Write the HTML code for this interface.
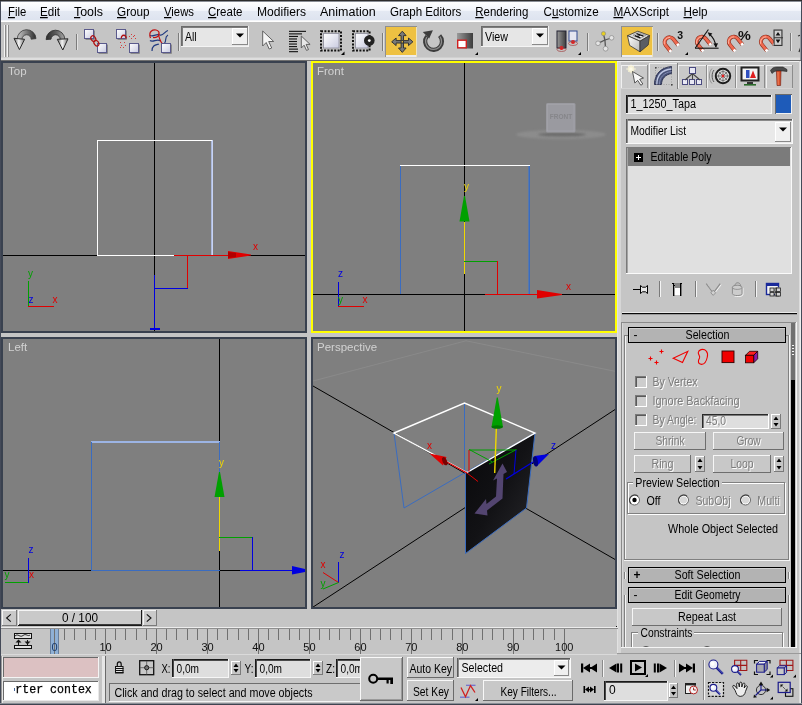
<!DOCTYPE html>
<html><head><meta charset="utf-8"><title>3ds Max</title>
<style>
html,body{margin:0;padding:0;background:#c5c5c5;overflow:hidden}
svg{display:block;will-change:transform}
text{font-family:"Liberation Sans",sans-serif;white-space:pre}
.mono{font-family:"Liberation Mono",monospace}
</style></head><body>
<svg width="802" height="705" viewBox="0 0 802 705">
<defs>
<linearGradient id="gMenu" x1="0" y1="0" x2="0" y2="1">
<stop offset="0" stop-color="#ffffff"/><stop offset="0.45" stop-color="#f1f4fa"/><stop offset="0.5" stop-color="#e4e9f3"/><stop offset="1" stop-color="#dde3ef"/>
</linearGradient>
<linearGradient id="gArrow" x1="0" y1="0" x2="1" y2="1">
<stop offset="0" stop-color="#e8e8e8"/><stop offset="1" stop-color="#3a3a3a"/>
</linearGradient>
<linearGradient id="gArrowR" x1="1" y1="0" x2="0" y2="1">
<stop offset="0" stop-color="#5a5a5a"/><stop offset="1" stop-color="#e8e8e8"/>
</linearGradient>
<linearGradient id="gBox" x1="0" y1="0" x2="1" y2="1">
<stop offset="0" stop-color="#ffffff"/><stop offset="1" stop-color="#c9cbe0"/>
</linearGradient>
<linearGradient id="gDark" x1="0" y1="0" x2="1" y2="0">
<stop offset="0" stop-color="#9a9a9a"/><stop offset="1" stop-color="#3c3c3c"/>
</linearGradient>
<linearGradient id="gMag" x1="0" y1="0" x2="1" y2="1">
<stop offset="0" stop-color="#ff9a80"/><stop offset="1" stop-color="#d83a20"/>
</linearGradient>
<radialGradient id="gCube" cx="0.5" cy="0.5" r="0.7">
<stop offset="0" stop-color="#a0a0a0"/><stop offset="1" stop-color="#8c8c8c"/>
</radialGradient>
<linearGradient id="gFace" x1="0" y1="0" x2="1" y2="1">
<stop offset="0" stop-color="#08080a"/><stop offset="0.5" stop-color="#121215"/><stop offset="1" stop-color="#2a2a2e"/>
</linearGradient>
<linearGradient id="gUndo" x1="0" y1="0" x2="1" y2="0">
<stop offset="0" stop-color="#c4c4c4"/><stop offset="0.4" stop-color="#8a8a8a"/><stop offset="1" stop-color="#2c2c2c"/>
</linearGradient>
<linearGradient id="gRedo" x1="0" y1="0" x2="1" y2="0">
<stop offset="0" stop-color="#2c2c2c"/><stop offset="0.5" stop-color="#5a5a5a"/><stop offset="1" stop-color="#a8a8a8"/>
</linearGradient>
<linearGradient id="gHead" x1="0" y1="0" x2="1" y2="0">
<stop offset="0" stop-color="#6a6a6a"/><stop offset="0.45" stop-color="#f4f4f4"/><stop offset="1" stop-color="#7a7a7a"/>
</linearGradient>
<linearGradient id="gKey" x1="0" y1="0" x2="1" y2="1">
<stop offset="0" stop-color="#ffffff"/><stop offset="1" stop-color="#b8b8b8"/>
</linearGradient>
</defs>
<rect x="0" y="0" width="802" height="705" fill="#c5c5c5"/>
<rect x="0" y="0" width="802" height="1" fill="#2b2b2b"/>
<rect x="0" y="1" width="802" height="1" fill="#8a8e96"/>
<rect x="0" y="1" width="1" height="704" fill="#444a58"/>
<rect x="1" y="2" width="801" height="19" fill="url(#gMenu)"/>
<rect x="1" y="20" width="801" height="1" fill="#f4f6fa"/>
<rect x="1" y="21" width="801" height="1" fill="#ffffff"/>
<text x="8" y="16" font-size="12.5" fill="#000" textLength="18.2" lengthAdjust="spacingAndGlyphs"><tspan text-decoration="underline">F</tspan>ile</text>
<text x="40" y="16" font-size="12.5" fill="#000" textLength="20" lengthAdjust="spacingAndGlyphs"><tspan text-decoration="underline">E</tspan>dit</text>
<text x="74" y="16" font-size="12.5" fill="#000" textLength="29" lengthAdjust="spacingAndGlyphs"><tspan text-decoration="underline">T</tspan>ools</text>
<text x="117" y="16" font-size="12.5" fill="#000" textLength="32.6" lengthAdjust="spacingAndGlyphs"><tspan text-decoration="underline">G</tspan>roup</text>
<text x="164" y="16" font-size="12.5" fill="#000" textLength="30" lengthAdjust="spacingAndGlyphs"><tspan text-decoration="underline">V</tspan>iews</text>
<text x="208" y="16" font-size="12.5" fill="#000" textLength="34.5" lengthAdjust="spacingAndGlyphs"><tspan text-decoration="underline">C</tspan>reate</text>
<text x="257" y="16" font-size="12.5" fill="#000" textLength="49" lengthAdjust="spacingAndGlyphs">Modifiers</text>
<text x="320" y="16" font-size="12.5" fill="#000" textLength="55.6" lengthAdjust="spacingAndGlyphs">Animation</text>
<text x="390" y="16" font-size="12.5" fill="#000" textLength="71.3" lengthAdjust="spacingAndGlyphs">Graph Editors</text>
<text x="475.3" y="16" font-size="12.5" fill="#000" textLength="53.0" lengthAdjust="spacingAndGlyphs"><tspan text-decoration="underline">R</tspan>endering</text>
<text x="543.6" y="16" font-size="12.5" fill="#000" textLength="55.1" lengthAdjust="spacingAndGlyphs">C<tspan text-decoration="underline">u</tspan>stomize</text>
<text x="613.4" y="16" font-size="12.5" fill="#000" textLength="55.6" lengthAdjust="spacingAndGlyphs"><tspan text-decoration="underline">M</tspan>AXScript</text>
<text x="683.5" y="16" font-size="12.5" fill="#000" textLength="24.0" lengthAdjust="spacingAndGlyphs"><tspan text-decoration="underline">H</tspan>elp</text>
<rect x="1" y="22" width="801" height="38" fill="#c5c5c5"/>
<rect x="1" y="57" width="801" height="1" fill="#d0d0d0"/>
<rect x="1" y="58" width="801" height="2" fill="#dedede"/>
<rect x="1" y="60" width="801" height="1" fill="#6e6e6e"/>
<rect x="4" y="25" width="1" height="32" fill="#f4f4f4"/>
<rect x="5" y="25" width="1" height="32" fill="#8a8a8a"/>
<rect x="7" y="25" width="1" height="32" fill="#f4f4f4"/>
<rect x="8" y="25" width="1" height="32" fill="#8a8a8a"/>
<path d="M17.3,39.5 A9.2,9.2 0 0 1 36,38.6 L31.2,39.2 A4.6,4.6 0 0 0 22,39.5 Z" fill="url(#gUndo)" stroke="#3a3a3a" stroke-width="0.8"/>
<polygon points="14,38.3 24.6,39.3 19.4,49.6" fill="url(#gHead)" stroke="#2a2a2a" stroke-width="1"/>
<path d="M46.1,39.6 A9.2,9.2 0 0 1 64.8,39.5 L60.2,39.5 A4.6,4.6 0 0 0 51,39.2 Z" fill="url(#gRedo)" stroke="#2a2a2a" stroke-width="0.8"/>
<polygon points="57.3,39.3 68,38.8 62.8,50" fill="url(#gHead)" stroke="#2a2a2a" stroke-width="1"/>
<rect x="76" y="34" width="1" height="16" fill="#7c7c7c"/>
<rect x="77" y="34" width="1" height="16" fill="#e2e2e2"/>
<rect x="84.5" y="29.5" width="9" height="9" fill="url(#gBox)" stroke="#5a5a8c" stroke-width="1"/>
<rect x="85.5" y="39.0" width="9.0" height="1" fill="#8a8a8a"/>
<rect x="94.0" y="30.5" width="1" height="9.0" fill="#8a8a8a"/>
<rect x="97.5" y="43.5" width="9" height="9" fill="url(#gBox)" stroke="#5a5a8c" stroke-width="1"/>
<rect x="98.5" y="53.0" width="9.0" height="1" fill="#8a8a8a"/>
<rect x="107.0" y="44.5" width="1" height="9.0" fill="#8a8a8a"/>
<ellipse cx="93.3" cy="38.6" rx="3" ry="2.2" fill="none" stroke="#b01010" stroke-width="1.2" transform="rotate(55 93.3 38.6)"/>
<ellipse cx="96.4" cy="43.2" rx="3" ry="2.2" fill="none" stroke="#b01010" stroke-width="1.2" transform="rotate(55 96.4 43.2)"/>
<rect x="116.5" y="29.5" width="9" height="9" fill="url(#gBox)" stroke="#5a5a8c" stroke-width="1"/>
<rect x="117.5" y="39.0" width="9.0" height="1" fill="#8a8a8a"/>
<rect x="126.0" y="30.5" width="1" height="9.0" fill="#8a8a8a"/>
<rect x="129.5" y="43.5" width="9" height="9" fill="url(#gBox)" stroke="#5a5a8c" stroke-width="1"/>
<rect x="130.5" y="53.0" width="9.0" height="1" fill="#8a8a8a"/>
<rect x="139.0" y="44.5" width="1" height="9.0" fill="#8a8a8a"/>
<path d="M121.5,38.5 A2.4,2.4 0 1 1 126,38.5" fill="none" stroke="#b01010" stroke-width="1.3"/>
<rect x="129" y="36" width="1" height="1" fill="#d04040"/>
<rect x="131" y="34" width="1" height="1" fill="#d04040"/>
<rect x="133" y="36" width="1" height="1" fill="#d04040"/>
<rect x="135" y="38" width="1" height="1" fill="#d04040"/>
<rect x="131" y="38" width="1" height="1" fill="#d04040"/>
<rect x="134" y="35" width="1" height="1" fill="#d04040"/>
<rect x="120" y="42" width="1" height="1" fill="#d04040"/>
<rect x="124" y="42" width="1" height="1" fill="#d04040"/>
<rect x="121" y="45" width="1" height="1" fill="#d04040"/>
<rect x="125" y="45" width="1" height="1" fill="#d04040"/>
<rect x="120" y="47" width="1" height="1" fill="#d04040"/>
<rect x="123" y="47" width="1" height="1" fill="#d04040"/>
<path d="M150,35 C152,38 156,33 160,35 C163,36.5 165,31 168,30.5" fill="none" stroke="#203a80" stroke-width="1.2"/>
<path d="M150,40.5 C153,43 157,38 160.5,41" fill="none" stroke="#203a80" stroke-width="1.2"/>
<path d="M152,51 C152,45 156,45 159,44" fill="none" stroke="#203a80" stroke-width="1.2"/>
<path d="M168,35 C164,37 167,41 164.5,43" fill="none" stroke="#203a80" stroke-width="1.2"/>
<path d="M150.5,38 C148,31 153,29.5 156,30 C161,31 160,38 153,37.5 M158.5,33.5 C159,38 160,41 162.5,44" fill="none" stroke="#c01010" stroke-width="1.2"/>
<rect x="161.5" y="43.5" width="9" height="9" fill="url(#gBox)" stroke="#5a5a8c" stroke-width="1"/>
<rect x="162.5" y="53.0" width="9.0" height="1" fill="#8a8a8a"/>
<rect x="171.0" y="44.5" width="1" height="9.0" fill="#8a8a8a"/>
<rect x="178" y="33" width="1" height="18" fill="#7c7c7c"/>
<rect x="179" y="33" width="1" height="18" fill="#e2e2e2"/>
<rect x="181" y="26" width="68" height="21" fill="#e6e6e6"/>
<rect x="181" y="26" width="68" height="1" fill="#6a6a6a"/>
<rect x="181" y="26" width="1" height="21" fill="#6a6a6a"/>
<rect x="181" y="46" width="68" height="1" fill="#f4f4f4"/>
<rect x="248" y="26" width="1" height="21" fill="#f4f4f4"/>
<rect x="182" y="27" width="66" height="1" fill="#7c7c7c"/>
<rect x="182" y="27" width="1" height="19" fill="#7c7c7c"/>
<text x="185" y="40.5" font-size="12" fill="#000" textLength="11.6" lengthAdjust="spacingAndGlyphs">All</text>
<rect x="232" y="28" width="16" height="17" fill="#f0f0f0"/>
<rect x="232" y="28" width="16" height="1" fill="#ffffff"/>
<rect x="232" y="28" width="1" height="17" fill="#ffffff"/>
<rect x="232" y="44" width="16" height="1" fill="#8a8a8a"/>
<rect x="247" y="28" width="1" height="17" fill="#8a8a8a"/>
<polygon points="236.0,33.5 244.0,33.5 240.0,37.5" fill="#000" stroke="none" stroke-width="1"/>
<polygon points="262.7,31.0 262.7,46.0 266.2,42.5 269.2,49.0 271.7,48.0 268.7,41.5 273.7,41.5" fill="#f4f4f4" stroke="#555" stroke-width="0.9"/>
<rect x="289" y="30.8" width="17" height="1.1" fill="#111"/>
<rect x="289" y="33.34" width="13" height="1.1" fill="#111"/>
<rect x="289" y="35.88" width="9" height="1.1" fill="#111"/>
<rect x="289" y="38.42" width="8" height="1.1" fill="#111"/>
<rect x="289" y="40.96" width="8" height="1.1" fill="#111"/>
<rect x="289" y="43.5" width="8" height="1.1" fill="#111"/>
<rect x="289" y="46.04" width="8" height="1.1" fill="#111"/>
<rect x="289" y="48.58" width="9" height="1.1" fill="#111"/>
<rect x="289" y="51.120000000000005" width="9" height="1.1" fill="#111"/>
<polygon points="301.3,36.0 301.3,48.0 304.1,45.2 306.5,50.4 308.5,49.6 306.1,44.4 310.1,44.4" fill="#e8e8e8" stroke="#555" stroke-width="0.9"/>
<rect x="323.5" y="33.5" width="15.5" height="14.5" fill="url(#gBox)" stroke="#8a8a9a" stroke-width="0.8"/>
<rect x="321" y="31.2" width="20" height="19.4" fill="none" stroke="#111" stroke-width="2" stroke-dasharray="2 1.4"/>
<polygon points="344.5,51.5 344.5,55 341,55" fill="#000" stroke="none" stroke-width="1"/>
<rect x="355.5" y="33.5" width="12.5" height="14.5" fill="url(#gBox)" stroke="#8a8a9a" stroke-width="0.8"/>
<rect x="353" y="31.2" width="16.6" height="19.4" fill="none" stroke="#111" stroke-width="2" stroke-dasharray="2 1.4"/>
<circle cx="369.3" cy="40.6" r="5.3" fill="#222"/><circle cx="369.3" cy="40.6" r="1.4" fill="#fff"/>
<rect x="382" y="33" width="1" height="18" fill="#7c7c7c"/>
<rect x="383" y="33" width="1" height="18" fill="#e2e2e2"/>
<rect x="385" y="26" width="32" height="31" fill="#eec142"/>
<rect x="385" y="26" width="32" height="1" fill="#8f8f8f"/>
<rect x="385" y="26" width="1" height="31" fill="#8f8f8f"/>
<rect x="386" y="55" width="31" height="1" fill="#ececec"/>
<rect x="386" y="56" width="31" height="1" fill="#ececec"/>
<rect x="416" y="27" width="1" height="30" fill="#f0e4b8"/>
<g transform="rotate(0 402.3 41.8)"><path d="M401.1,40.599999999999994 L401.1,35.599999999999994 L398.5,35.599999999999994 L402.3,31.199999999999996 L406.1,35.599999999999994 L403.5,35.599999999999994 L403.5,40.599999999999994 Z" fill="#7a7a7a" stroke="#333" stroke-width="1"/></g>
<g transform="rotate(90 402.3 41.8)"><path d="M401.1,40.599999999999994 L401.1,35.599999999999994 L398.5,35.599999999999994 L402.3,31.199999999999996 L406.1,35.599999999999994 L403.5,35.599999999999994 L403.5,40.599999999999994 Z" fill="#7a7a7a" stroke="#333" stroke-width="1"/></g>
<g transform="rotate(180 402.3 41.8)"><path d="M401.1,40.599999999999994 L401.1,35.599999999999994 L398.5,35.599999999999994 L402.3,31.199999999999996 L406.1,35.599999999999994 L403.5,35.599999999999994 L403.5,40.599999999999994 Z" fill="#7a7a7a" stroke="#333" stroke-width="1"/></g>
<g transform="rotate(270 402.3 41.8)"><path d="M401.1,40.599999999999994 L401.1,35.599999999999994 L398.5,35.599999999999994 L402.3,31.199999999999996 L406.1,35.599999999999994 L403.5,35.599999999999994 L403.5,40.599999999999994 Z" fill="#7a7a7a" stroke="#333" stroke-width="1"/></g>
<path d="M439.6,35.6 A8.4,8.4 0 1 1 427,36.2" fill="none" stroke="#3c3c3c" stroke-width="4.2"/>
<path d="M440,36.7 A8.0,8.0 0 1 1 426.8,37.2" fill="none" stroke="#8c8c8c" stroke-width="1.3"/>
<polygon points="422.8,32 432.9,30.2 429.2,38.6" fill="#3c3c3c" stroke="none" stroke-width="1"/>
<rect x="457" y="33" width="16" height="15.5" fill="url(#gDark)"/>
<rect x="457.7" y="40.2" width="8.6" height="7.6" fill="#ffffff" stroke="#d02020" stroke-width="1.4"/>
<polygon points="478,52 478,55 475,55" fill="#000" stroke="none" stroke-width="1"/>
<rect x="481" y="26" width="68" height="21" fill="#e6e6e6"/>
<rect x="481" y="26" width="68" height="1" fill="#6a6a6a"/>
<rect x="481" y="26" width="1" height="21" fill="#6a6a6a"/>
<rect x="481" y="46" width="68" height="1" fill="#f4f4f4"/>
<rect x="548" y="26" width="1" height="21" fill="#f4f4f4"/>
<rect x="482" y="27" width="66" height="1" fill="#7c7c7c"/>
<rect x="482" y="27" width="1" height="19" fill="#7c7c7c"/>
<text x="485" y="40.5" font-size="12" fill="#000" textLength="23" lengthAdjust="spacingAndGlyphs">View</text>
<rect x="532" y="28" width="16" height="17" fill="#f0f0f0"/>
<rect x="532" y="28" width="16" height="1" fill="#ffffff"/>
<rect x="532" y="28" width="1" height="17" fill="#ffffff"/>
<rect x="532" y="44" width="16" height="1" fill="#8a8a8a"/>
<rect x="547" y="28" width="1" height="17" fill="#8a8a8a"/>
<polygon points="536.0,33.5 544.0,33.5 540.0,37.5" fill="#000" stroke="none" stroke-width="1"/>
<rect x="557" y="31" width="9" height="17" fill="url(#gDark)" stroke="#223" stroke-width="1"/>
<rect x="569" y="31" width="8" height="10" fill="#e6e6f0" stroke="#334a90" stroke-width="1"/>
<circle cx="561.5" cy="48" r="2" fill="#e02020"/><ellipse cx="561.5" cy="49.5" rx="4.5" ry="2" fill="none" stroke="#a04040" stroke-width="0.7"/>
<circle cx="573" cy="42" r="2" fill="#e02020"/><ellipse cx="573" cy="43.5" rx="4.5" ry="2" fill="none" stroke="#a04040" stroke-width="0.7"/>
<polygon points="581,52 581,55 578,55" fill="#000" stroke="none" stroke-width="1"/>
<rect x="587" y="33" width="1" height="18" fill="#7c7c7c"/>
<rect x="588" y="33" width="1" height="18" fill="#e2e2e2"/>
<line x1="604.9" y1="40" x2="603.5" y2="34" stroke="#555" stroke-width="1.3"/>
<line x1="604.9" y1="40" x2="611.5" y2="38" stroke="#555" stroke-width="1.3"/>
<line x1="604.9" y1="40" x2="598" y2="43.3" stroke="#555" stroke-width="1.3"/>
<line x1="604.9" y1="40" x2="605.6" y2="48.5" stroke="#555" stroke-width="1.3"/>
<circle cx="603.5" cy="33.7" r="2.1" fill="#e8d020" stroke="#8a8a8a" stroke-width="0.7"/>
<circle cx="611.6" cy="37.8" r="2.3" fill="#e4e4e4" stroke="#8a8a8a" stroke-width="0.7"/>
<circle cx="598" cy="43.3" r="2.3" fill="#e4e4e4" stroke="#8a8a8a" stroke-width="0.7"/>
<circle cx="605.6" cy="48.7" r="2.4" fill="#e4e4e4" stroke="#8a8a8a" stroke-width="0.7"/>
<rect x="621" y="26" width="32" height="31" fill="#eec142"/>
<rect x="621" y="26" width="32" height="1" fill="#8f8f8f"/>
<rect x="621" y="26" width="1" height="31" fill="#8f8f8f"/>
<rect x="622" y="55" width="31" height="1" fill="#ececec"/>
<rect x="622" y="56" width="31" height="1" fill="#ececec"/>
<rect x="652" y="27" width="1" height="30" fill="#f0e4b8"/>
<polygon points="627.5,35.7 637.8,31.2 649.6,35.6 640,41.2" fill="#d8d8d8" stroke="#333" stroke-width="0.8"/>
<polygon points="627.5,35.7 640,41.2 640,51.8 629.6,45.4" fill="url(#gKey)" stroke="#333" stroke-width="0.8"/>
<polygon points="640,41.2 649.6,35.6 648.2,45 640,51.8" fill="#5a5d64" stroke="#333" stroke-width="0.8"/>
<polygon points="633,35.2 638.4,32.8 645.6,35.4 640,38.4" fill="#f4f4f4" stroke="#666" stroke-width="0.5"/>
<path d="M636.5,33.6 L643.5,36.2 M640,34.9 L637.2,36.6 M634.8,35.6 L640.4,37.8" fill="none" stroke="#111" stroke-width="1.3"/>
<rect x="657" y="33" width="1" height="18" fill="#7c7c7c"/>
<rect x="658" y="33" width="1" height="18" fill="#e2e2e2"/>
<g transform="translate(0 0)"><path d="M670.7,51.5 L665.7,45.3 A4.9,4.9 0 0 1 673.3,39.1 L678.3,45.3" fill="none" stroke="#8a3020" stroke-width="3.9"/><path d="M670.7,51.5 L665.7,45.3 A4.9,4.9 0 0 1 673.3,39.1 L678.3,45.3" fill="none" stroke="#f06a50" stroke-width="2.7"/><path d="M664.3,44.4 A5.6,5.6 0 0 1 670,37.4" fill="none" stroke="#ffb4a0" stroke-width="1"/><path d="M669.6,50.1 L671,51.9 M677.2,43.9 L678.6,45.7" fill="none" stroke="#ffffff" stroke-width="2.7"/></g>
<text x="677.3" y="38.6" font-size="10.5" fill="#111" font-weight="bold">3</text>
<polygon points="688,52 688,55 685,55" fill="#000" stroke="none" stroke-width="1"/>
<g transform="translate(32.3 -0.6)"><path d="M670.7,51.5 L665.7,45.3 A4.9,4.9 0 0 1 673.3,39.1 L678.3,45.3" fill="none" stroke="#8a3020" stroke-width="3.9"/><path d="M670.7,51.5 L665.7,45.3 A4.9,4.9 0 0 1 673.3,39.1 L678.3,45.3" fill="none" stroke="#f06a50" stroke-width="2.7"/><path d="M664.3,44.4 A5.6,5.6 0 0 1 670,37.4" fill="none" stroke="#ffb4a0" stroke-width="1"/><path d="M669.6,50.1 L671,51.9 M677.2,43.9 L678.6,45.7" fill="none" stroke="#ffffff" stroke-width="2.7"/></g>
<line x1="695" y1="48.2" x2="718.6" y2="48.2" stroke="#111" stroke-width="1.1"/>
<line x1="695.3" y1="48" x2="708.4" y2="29.5" stroke="#111" stroke-width="1.1"/>
<path d="M709.2,34 C713,37 715.5,41.5 715.8,47" fill="none" stroke="#111" stroke-width="1.1"/>
<polygon points="707.6,32.3 712.4,33.4 709.6,36.6" fill="#111" stroke="none" stroke-width="1"/>
<polygon points="713.4,43.6 718,43.2 716,47.8" fill="#111" stroke="none" stroke-width="1"/>
<g transform="translate(64.2 -0.6)"><path d="M670.7,51.5 L665.7,45.3 A4.9,4.9 0 0 1 673.3,39.1 L678.3,45.3" fill="none" stroke="#8a3020" stroke-width="3.9"/><path d="M670.7,51.5 L665.7,45.3 A4.9,4.9 0 0 1 673.3,39.1 L678.3,45.3" fill="none" stroke="#f06a50" stroke-width="2.7"/><path d="M664.3,44.4 A5.6,5.6 0 0 1 670,37.4" fill="none" stroke="#ffb4a0" stroke-width="1"/><path d="M669.6,50.1 L671,51.9 M677.2,43.9 L678.6,45.7" fill="none" stroke="#ffffff" stroke-width="2.7"/></g>
<text x="738" y="40" font-size="13" fill="#111" textLength="12.8" lengthAdjust="spacingAndGlyphs" font-weight="bold">%</text>
<g transform="translate(96.3 -0.6)"><path d="M670.7,51.5 L665.7,45.3 A4.9,4.9 0 0 1 673.3,39.1 L678.3,45.3" fill="none" stroke="#8a3020" stroke-width="3.9"/><path d="M670.7,51.5 L665.7,45.3 A4.9,4.9 0 0 1 673.3,39.1 L678.3,45.3" fill="none" stroke="#f06a50" stroke-width="2.7"/><path d="M664.3,44.4 A5.6,5.6 0 0 1 670,37.4" fill="none" stroke="#ffb4a0" stroke-width="1"/><path d="M669.6,50.1 L671,51.9 M677.2,43.9 L678.6,45.7" fill="none" stroke="#ffffff" stroke-width="2.7"/></g>
<rect x="774" y="30" width="8" height="15.5" fill="#a8a8a8" stroke="#333" stroke-width="1"/>
<rect x="774" y="37.3" width="9" height="1" fill="#333"/>
<rect x="775" y="31" width="6" height="5.6" fill="#d0d0d0"/>
<rect x="775" y="38.6" width="6" height="5.8" fill="#d0d0d0"/>
<polygon points="775.6,35.6 780.4,35.6 778,32" fill="#111" stroke="none" stroke-width="1"/>
<polygon points="775.6,39.6 780.4,39.6 778,43.2" fill="#111" stroke="none" stroke-width="1"/>
<rect x="790" y="33" width="1" height="18" fill="#7c7c7c"/>
<rect x="791" y="33" width="1" height="18" fill="#e2e2e2"/>
<path d="M798,36 L801,35 L802,44 L799,52" fill="none" stroke="#333" stroke-width="1.2"/>
<g shape-rendering="crispEdges">
<rect x="1" y="61" width="306" height="272" fill="#39414f"/>
<rect x="3" y="63" width="302" height="268" fill="#7f7f7f"/>
<rect x="311" y="61" width="306" height="272" fill="#ffff00"/>
<rect x="313" y="63" width="302" height="268" fill="#7f7f7f"/>
<rect x="1" y="337" width="306" height="272" fill="#39414f"/>
<rect x="3" y="339" width="302" height="268" fill="#7f7f7f"/>
<rect x="311" y="337" width="306" height="272" fill="#39414f"/>
<rect x="313" y="339" width="302" height="268" fill="#7f7f7f"/>
</g>
<g shape-rendering="crispEdges">
<rect x="154" y="63" width="1" height="268" fill="#000"/>
<rect x="3" y="255" width="302" height="1" fill="#000"/>
<rect x="97" y="140" width="116" height="1" fill="#ffffff"/>
<rect x="97" y="140" width="1" height="116" fill="#ffffff"/>
<rect x="97" y="255" width="78" height="1" fill="#ffffff"/>
<rect x="212" y="140" width="1" height="116" fill="#c8d4f4"/>
<rect x="211" y="141" width="1" height="114" fill="#aab8dc"/>
<rect x="174" y="255" width="55" height="1" fill="#e00000"/>
<rect x="187" y="255" width="1" height="34" fill="#e00000"/>
<rect x="154" y="288" width="34" height="1" fill="#0000e0"/>
<rect x="154" y="275" width="1" height="55" fill="#0000e0"/>
<rect x="150" y="328" width="10" height="2" fill="#0000e0"/>
<rect x="28" y="281" width="1" height="26" fill="#00a000"/>
<rect x="28" y="306" width="26" height="1" fill="#e00000"/>
</g>
<polygon points="228,251 228,259 251,255.5 251,254.5" fill="#e00000" stroke="none" stroke-width="1"/>
<polygon points="228,252 236,253 236,257 228,258" fill="#b00000" stroke="none" stroke-width="1"/>
<text x="8" y="75" font-size="11.5" fill="#d2d2d2">Top</text>
<text x="253" y="250" font-size="10" fill="#e00000">x</text>
<text x="28" y="277" font-size="10" fill="#00a000">y</text>
<text x="28.5" y="303" font-size="10" fill="#0000e0">z</text>
<text x="52.5" y="303" font-size="10" fill="#e00000">x</text>
<g shape-rendering="crispEdges">
<rect x="464" y="63" width="1" height="268" fill="#000"/>
<rect x="313" y="294" width="302" height="1" fill="#000"/>
<rect x="400" y="165" width="130" height="1" fill="#ffffff"/>
<rect x="400" y="166" width="1" height="128" fill="#3a6cc0"/>
<rect x="529" y="166" width="1" height="128" fill="#3a6cc0"/>
<rect x="528" y="166" width="1" height="128" fill="#5678ae"/>
<rect x="464" y="222" width="1" height="52" fill="#f0d800"/>
<rect x="464" y="261" width="34" height="1" fill="#00a000"/>
<rect x="497" y="261" width="1" height="34" fill="#e00000"/>
<rect x="485" y="294" width="53" height="1" fill="#e00000"/>
<rect x="338" y="282" width="1" height="25" fill="#0000e0"/>
<rect x="338" y="306" width="26" height="1" fill="#e00000"/>
</g>
<polygon points="459.5,221.5 469.5,221.5 465,196 464,196" fill="#00a000" stroke="none" stroke-width="1"/>
<polygon points="537,290 537,298.5 562,295 562,294" fill="#e00000" stroke="none" stroke-width="1"/>
<text x="317" y="75" font-size="11.5" fill="#d2d2d2">Front</text>
<text x="464" y="190" font-size="10" fill="#f0d800">y</text>
<text x="566" y="290" font-size="10" fill="#e00000">x</text>
<text x="338" y="277" font-size="10" fill="#0000e0">z</text>
<text x="338" y="303" font-size="10" fill="#00a000">y</text>
<text x="362.5" y="303" font-size="10" fill="#e00000">x</text>
<filter id="fB" x="-20%" y="-50%" width="140%" height="200%"><feGaussianBlur stdDeviation="1.2"/></filter>
<ellipse cx="561" cy="134.5" rx="45" ry="4.6" fill="#8c8c8c" filter="url(#fB)"/>
<ellipse cx="562" cy="134.6" rx="24" ry="1.9" fill="#6c6c6c" filter="url(#fB)"/>
<rect x="546" y="103" width="29.5" height="29.5" fill="#9a9aa0" rx="1.5"/>
<rect x="547.5" y="104.5" width="26.5" height="26.5" fill="none" stroke="#a4a4aa" stroke-width="0.8"/>
<text x="561" y="118.5" font-size="6.5" fill="#86868a" text-anchor="middle" font-weight="bold">FRONT</text>
<g shape-rendering="crispEdges">
<rect x="219" y="339" width="1" height="268" fill="#000"/>
<rect x="3" y="570" width="302" height="1" fill="#000"/>
<rect x="91" y="441" width="129" height="1" fill="#9cb4e4"/>
<rect x="91" y="442" width="129" height="1" fill="#9cb4e4"/>
<rect x="91" y="442" width="1" height="129" fill="#3a6cc0"/>
<rect x="91" y="570" width="129" height="1" fill="#3a6cc0"/>
<rect x="219" y="442" width="1" height="31" fill="#3a6cc0"/>
<rect x="219" y="497" width="1" height="54" fill="#f0d800"/>
<rect x="219" y="537" width="34" height="1" fill="#00a000"/>
<rect x="252" y="537" width="1" height="34" fill="#0000e0"/>
<rect x="240" y="570" width="53" height="1" fill="#0000e0"/>
<rect x="28" y="558" width="1" height="25" fill="#0000e0"/>
<rect x="5" y="582" width="23" height="1" fill="#00a000"/>
</g>
<polygon points="214.5,497 224.5,497 220,472 219,472" fill="#00a000" stroke="none" stroke-width="1"/>
<polygon points="292,566 292,574.5 305,572 305,569" fill="#0000e0" stroke="none" stroke-width="1"/>
<text x="8" y="350.5" font-size="11.5" fill="#d2d2d2">Left</text>
<text x="219" y="466" font-size="10" fill="#f0d800">y</text>
<text x="28.5" y="553" font-size="10" fill="#0000e0">z</text>
<text x="4.5" y="578" font-size="10" fill="#00a000">y</text>
<text x="29" y="578" font-size="10" fill="#e00000">x</text>
<clipPath id="cpP"><rect x="313" y="339" width="302" height="268"/></clipPath>
<g clip-path="url(#cpP)">
<line x1="313" y1="381" x2="466" y2="340.8" stroke="#8a8a8a" stroke-width="1"/>
<line x1="466" y1="340.8" x2="616" y2="371.5" stroke="#8a8a8a" stroke-width="1"/>
<line x1="313" y1="386" x2="616" y2="560" stroke="#000" stroke-width="1"/>
<line x1="313" y1="607.1" x2="616" y2="408.9" stroke="#000" stroke-width="1"/>
<line x1="394" y1="433" x2="404" y2="508" stroke="#3a6cc0" stroke-width="1"/>
<line x1="404" y1="508" x2="466" y2="472" stroke="#3a6cc0" stroke-width="1"/>
<line x1="464.5" y1="403" x2="464.5" y2="472" stroke="#3a6cc0" stroke-width="1"/>
<polygon points="465.5,472.5 535,433 526.5,508 465.5,553.5" fill="url(#gFace)" stroke="#3a6cc0" stroke-width="1"/>
<filter id="fB2"><feGaussianBlur stdDeviation="0.5"/></filter>
<polygon points="474.5,513.5 486,499 486.5,504 496,496.5 497,478.5 493,480.5 502.5,463.5 507,472 503.5,474 502.5,498.5 487,510.5 487.5,515.5" fill="#52446f" stroke="none" stroke-width="1" filter="url(#fB2)"/>
<polygon points="394,433 464.5,403 535,433 467,472.5" fill="none" stroke="#ffffff" stroke-width="1.4"/>
<line x1="469" y1="450" x2="516" y2="450" stroke="#00a000" stroke-width="1"/>
<line x1="469" y1="450" x2="469" y2="472" stroke="#e00000" stroke-width="1"/>
<line x1="469.2" y1="449.5" x2="492" y2="461.7" stroke="#00a000" stroke-width="1"/>
<line x1="516.5" y1="449.5" x2="489" y2="464" stroke="#00a000" stroke-width="1"/>
<line x1="516" y1="450" x2="514" y2="474" stroke="#0000e0" stroke-width="1"/>
<line x1="506" y1="479" x2="533" y2="462" stroke="#0000e0" stroke-width="1.2"/>
<line x1="494.7" y1="473" x2="496.4" y2="427" stroke="#f0d800" stroke-width="1.4"/>
<polygon points="491.5,427 503,427 497.8,397.5 496.8,397.5" fill="#00a000" stroke="none" stroke-width="1"/>
<ellipse cx="497.2" cy="427" rx="5.7" ry="1.8" fill="#007800"/>
<line x1="445" y1="461" x2="467" y2="473" stroke="#e00000" stroke-width="1.2"/>
<line x1="467" y1="473" x2="478" y2="481.5" stroke="#e00000" stroke-width="1"/>
<polygon points="429.5,453.5 446.5,457 443,465.5" fill="#e00000" stroke="none" stroke-width="1"/>
<ellipse cx="444.8" cy="461.2" rx="2.2" ry="4.4" fill="#7a0000" transform="rotate(-25 444.8 461.2)"/>
<polygon points="549,454 534.5,456 536.5,466.5" fill="#0000e0" stroke="none" stroke-width="1"/>
<ellipse cx="535.5" cy="461.3" rx="2.4" ry="5.2" fill="#00007a" transform="rotate(-10 535.5 461.3)"/>
<line x1="338.5" y1="562" x2="338.5" y2="583" stroke="#0000e0" stroke-width="1"/>
<line x1="338.5" y1="582.5" x2="323" y2="572.5" stroke="#e00000" stroke-width="1"/>
<line x1="338.5" y1="582.5" x2="323" y2="589" stroke="#00a000" stroke-width="1"/>
</g>
<text x="317" y="350.5" font-size="11.5" fill="#d2d2d2">Perspective</text>
<text x="496.5" y="392" font-size="10" fill="#f0d800">y</text>
<text x="427" y="449" font-size="10" fill="#e00000">x</text>
<text x="551" y="449" font-size="10" fill="#0000e0">z</text>
<text x="339.5" y="558" font-size="10" fill="#0000e0">z</text>
<text x="320.5" y="568" font-size="10" fill="#e00000">x</text>
<text x="320.5" y="587" font-size="10" fill="#00a000">y</text>
<g shape-rendering="crispEdges">
<rect x="617" y="61" width="4" height="592" fill="#d6d6d6"/>
<rect x="617" y="61" width="1" height="592" fill="#e2e2e2"/>
<rect x="617" y="61" width="185" height="1" fill="#f0f0f0"/>
<rect x="799" y="61" width="1" height="642" fill="#dcdcdc"/>
<rect x="800" y="61" width="1" height="642" fill="#eeeeee"/>
<rect x="621" y="65" width="27" height="23" fill="#c9c9c9"/>
<rect x="621" y="65" width="27" height="1" fill="#f0f0f0"/>
<rect x="621" y="65" width="1" height="23" fill="#f0f0f0"/>
<rect x="647" y="65" width="1" height="23" fill="#8c8c8c"/>
<rect x="621" y="88" width="27" height="1" fill="#d4d4d4"/>
<rect x="649" y="63" width="29" height="26" fill="#c8c8c8"/>
<rect x="649" y="63" width="29" height="1" fill="#ececec"/>
<rect x="649" y="63" width="1" height="26" fill="#f4f4f4"/>
<rect x="677" y="63" width="1" height="26" fill="#808080"/>
<rect x="678" y="65" width="29" height="23" fill="#c9c9c9"/>
<rect x="678" y="65" width="29" height="1" fill="#f0f0f0"/>
<rect x="678" y="65" width="1" height="23" fill="#f0f0f0"/>
<rect x="706" y="65" width="1" height="23" fill="#8c8c8c"/>
<rect x="678" y="88" width="29" height="1" fill="#d4d4d4"/>
<rect x="707" y="65" width="29" height="23" fill="#c9c9c9"/>
<rect x="707" y="65" width="29" height="1" fill="#f0f0f0"/>
<rect x="707" y="65" width="1" height="23" fill="#f0f0f0"/>
<rect x="735" y="65" width="1" height="23" fill="#8c8c8c"/>
<rect x="707" y="88" width="29" height="1" fill="#d4d4d4"/>
<rect x="736" y="65" width="29" height="23" fill="#c9c9c9"/>
<rect x="736" y="65" width="29" height="1" fill="#f0f0f0"/>
<rect x="736" y="65" width="1" height="23" fill="#f0f0f0"/>
<rect x="764" y="65" width="1" height="23" fill="#8c8c8c"/>
<rect x="736" y="88" width="29" height="1" fill="#d4d4d4"/>
<rect x="766" y="65" width="27" height="23" fill="#c9c9c9"/>
<rect x="766" y="65" width="27" height="1" fill="#f0f0f0"/>
<rect x="766" y="65" width="1" height="23" fill="#f0f0f0"/>
<rect x="792" y="65" width="1" height="23" fill="#8c8c8c"/>
<rect x="766" y="88" width="27" height="1" fill="#d4d4d4"/>
</g>
<circle cx="631" cy="69" r="3.4" fill="#fff8d0" opacity="0.7"/><circle cx="631" cy="69" r="1.6" fill="#ffffff"/>
<line x1="626" y1="69" x2="636" y2="69" stroke="#fffbe0" stroke-width="0.7"/>
<line x1="631" y1="64.5" x2="631" y2="73.5" stroke="#fffbe0" stroke-width="0.7"/>
<line x1="628" y1="66" x2="634" y2="72" stroke="#fffbe0" stroke-width="0.5"/>
<line x1="634" y1="66" x2="628" y2="72" stroke="#fffbe0" stroke-width="0.5"/>
<polygon points="632.5,71.5 643.5,78 639.6,79.3 642.8,84 640.8,85.2 637.7,80.4 634.8,83" fill="#f8f8f8" stroke="#333" stroke-width="0.8"/>
<path d="M654.5,84.5 C654.5,74 661,67.5 671.5,66.5 L671.5,73.5 C665.5,74.5 661.5,78.5 661.5,84.5 Z" fill="#4a5478" stroke="#20264a" stroke-width="0.9"/>
<path d="M656.8,84.5 C656.8,75.5 662,70 671.5,69" fill="none" stroke="#c0c8e4" stroke-width="1.3"/>
<path d="M659.4,84.5 C659.4,77.5 663.6,72.6 671.5,71.6" fill="none" stroke="#8088b0" stroke-width="1"/>
<rect x="655" y="67" width="1.5" height="1.5" fill="#222"/>
<rect x="671" y="84" width="1.5" height="1.5" fill="#222"/>
<rect x="655.5" y="67.5" width="16" height="17" fill="none" stroke="#777" stroke-width="0.5" stroke-dasharray="1 1.5"/>
<rect x="689.5" y="67.5" width="6" height="6" fill="#e8e8f4" stroke="#4a4a80" stroke-width="1"/>
<rect x="682.5" y="79.5" width="5" height="5" fill="#e8e8f4" stroke="#4a4a80" stroke-width="1"/>
<rect x="689.5" y="79.5" width="5" height="5" fill="#e8e8f4" stroke="#4a4a80" stroke-width="1"/>
<rect x="696.5" y="79.5" width="5" height="5" fill="#e8e8f4" stroke="#4a4a80" stroke-width="1"/>
<line x1="692.5" y1="74" x2="692.5" y2="79.5" stroke="#444" stroke-width="1.1"/>
<line x1="692" y1="74" x2="685" y2="80" stroke="#444" stroke-width="1.1"/>
<line x1="693" y1="74" x2="700" y2="80" stroke="#444" stroke-width="1.1"/>
<circle cx="723" cy="76" r="7.2" fill="#dcdcdc" stroke="#1a1a1a" stroke-width="2"/><circle cx="723" cy="76" r="4.5" fill="none" stroke="#666" stroke-width="0.8"/>
<line x1="716.5" y1="76" x2="729.5" y2="76" stroke="#555" stroke-width="0.7" transform="rotate(0 723 76)"/>
<line x1="716.5" y1="76" x2="729.5" y2="76" stroke="#555" stroke-width="0.7" transform="rotate(45 723 76)"/>
<line x1="716.5" y1="76" x2="729.5" y2="76" stroke="#555" stroke-width="0.7" transform="rotate(90 723 76)"/>
<line x1="716.5" y1="76" x2="729.5" y2="76" stroke="#555" stroke-width="0.7" transform="rotate(135 723 76)"/>
<circle cx="723" cy="76" r="1.4" fill="#e02020"/>
<path d="M714,70 C711.5,73 711.5,79 714,82" fill="none" stroke="#555" stroke-width="1"/>
<path d="M712,68.5 C708.5,72 708.5,80 712,83.5" fill="none" stroke="#888" stroke-width="0.8"/>
<rect x="741.5" y="67.5" width="17" height="13" fill="#f4f4f4" stroke="#222" stroke-width="2"/>
<rect x="746" y="70" width="3.5" height="8" fill="#3050c0"/>
<polygon points="750,78 756,78 753,70.5" fill="#e02020" stroke="none" stroke-width="1"/>
<rect x="747" y="82" width="6" height="2" fill="#333"/>
<rect x="744" y="84" width="12" height="1.6" fill="#2a6a2a"/>
<path d="M770.5,70.5 C772,68 774,67 777,67 L783,67 L787,69.5 L787,71.5 L783,71 L777,71 C775,71 773.5,72 772,73.5 Z" fill="#4a4a4a" stroke="#222" stroke-width="0.6"/>
<polygon points="776.4,71 781,71 780.6,85.5 777,85.5" fill="#d8502a" stroke="#6a1a10" stroke-width="0.6"/>
<line x1="778" y1="72" x2="778.2" y2="85" stroke="#f09070" stroke-width="0.8"/>
<g shape-rendering="crispEdges">
<rect x="626" y="95" width="146" height="19" fill="#dedede"/>
<rect x="626" y="95" width="146" height="1" fill="#1a1a1a"/>
<rect x="626" y="96" width="146" height="1" fill="#3c3c3c"/>
<rect x="626" y="95" width="1" height="19" fill="#1a1a1a"/>
<rect x="627" y="95" width="1" height="19" fill="#3c3c3c"/>
<rect x="626" y="113" width="146" height="1" fill="#f4f4f4"/>
<rect x="771" y="95" width="1" height="19" fill="#f4f4f4"/>
<rect x="775" y="94" width="17" height="20" fill="#6a6a6a"/>
<rect x="776" y="95" width="16" height="19" fill="#f0f0f0"/>
<rect x="776" y="95" width="15" height="18" fill="#1e5bb9"/>
<rect x="626" y="119" width="167" height="25" fill="#e9e9e9"/>
<rect x="626" y="119" width="167" height="1" fill="#5a5a5a"/>
<rect x="626" y="120" width="167" height="1" fill="#8a8a8a"/>
<rect x="626" y="119" width="1" height="25" fill="#5a5a5a"/>
<rect x="627" y="119" width="1" height="25" fill="#8a8a8a"/>
<rect x="626" y="143" width="167" height="1" fill="#f8f8f8"/>
<rect x="792" y="119" width="1" height="25" fill="#f8f8f8"/>
</g>
<rect x="775" y="122" width="16" height="20" fill="#f0f0f0"/>
<rect x="775" y="122" width="16" height="1" fill="#ffffff"/>
<rect x="775" y="122" width="1" height="20" fill="#ffffff"/>
<rect x="775" y="141" width="16" height="1" fill="#8a8a8a"/>
<rect x="790" y="122" width="1" height="20" fill="#8a8a8a"/>
<polygon points="779.0,127.5 787.0,127.5 783.0,131.5" fill="#000" stroke="none" stroke-width="1"/>
<text x="630.5" y="108" font-size="12" fill="#000" textLength="65.5" lengthAdjust="spacingAndGlyphs">1_1250_Tapa</text>
<text x="630.5" y="134.5" font-size="12" fill="#000" textLength="55.5" lengthAdjust="spacingAndGlyphs">Modifier List</text>
<g shape-rendering="crispEdges">
<rect x="626" y="147" width="166" height="127" fill="#e0e0e0"/>
<rect x="626" y="147" width="166" height="1" fill="#7a7a7a"/>
<rect x="626" y="147" width="1" height="127" fill="#7a7a7a"/>
<rect x="627" y="148" width="1" height="125" fill="#a4a4a4"/>
<rect x="626" y="273" width="166" height="1" fill="#fafafa"/>
<rect x="791" y="147" width="1" height="127" fill="#fafafa"/>
<rect x="628" y="148" width="162" height="18" fill="#7b7b7b"/>
<rect x="634" y="153" width="9" height="9" fill="#000"/>
<rect x="636" y="157" width="5" height="1" fill="#fff"/>
<rect x="638" y="155" width="1" height="5" fill="#fff"/>
</g>
<text x="650.5" y="161" font-size="12" fill="#000" textLength="61" lengthAdjust="spacingAndGlyphs">Editable Poly</text>
<g shape-rendering="crispEdges">
<rect x="659" y="281" width="1" height="16" fill="#7a7a7a"/>
<rect x="660" y="281" width="1" height="16" fill="#f4f4f4"/>
<rect x="695" y="281" width="1" height="16" fill="#7a7a7a"/>
<rect x="696" y="281" width="1" height="16" fill="#f4f4f4"/>
<rect x="755" y="281" width="1" height="16" fill="#7a7a7a"/>
<rect x="756" y="281" width="1" height="16" fill="#f4f4f4"/>
<rect x="633" y="289" width="8" height="1" fill="#000"/>
</g>
<path d="M640.5,285.5 L640.5,293.5 L642.5,291.8 L645.5,291.8 L647.5,293.5 L647.5,285.5 L645.5,287.2 L642.5,287.2 Z" fill="#e8e8e8" stroke="#000" stroke-width="1"/>
<rect x="674" y="284" width="6" height="11" fill="#fff"/>
<rect x="673" y="283" width="1.4" height="13" fill="#000"/>
<rect x="680" y="283" width="1.4" height="13" fill="#000"/>
<path d="M672,283 L675,286 M682,283 L679,286" fill="none" stroke="#000" stroke-width="1"/>
<rect x="675" y="283" width="5" height="5" fill="#888"/>
<path d="M707.2,284.7 L714,294 L721.2,284.7" fill="none" stroke="#f4f4f4" stroke-width="1"/>
<path d="M706.2,283.7 L713.2,293 L720.2,283.7" fill="none" stroke="#8c8c8c" stroke-width="1.1"/>
<polygon points="713.2,290.2 715.6,292.8 713.2,295.4 710.8,292.8" fill="#d0d0d0" stroke="#8c8c8c" stroke-width="0.9"/>
<path d="M733.4,288.2 C733.4,285.6 743,285.6 743,288.2 L743,294.6 C743,297.2 733.4,297.2 733.4,294.6 Z" fill="none" stroke="#f4f4f4" stroke-width="1"/>
<path d="M732.4,287.2 C732.4,284.6 742,284.6 742,287.2 L742,293.6 C742,296.2 732.4,296.2 732.4,293.6 Z" fill="#cccccc" stroke="#8c8c8c" stroke-width="1"/>
<path d="M732.4,287.6 C733,290 741.4,290 742,287.6" fill="none" stroke="#8c8c8c" stroke-width="0.9"/>
<path d="M735,286 C734.6,281.6 741,281.6 740.6,286.4" fill="none" stroke="#8c8c8c" stroke-width="1"/>
<rect x="766.5" y="283.5" width="12" height="11" fill="#f4f4f4" stroke="#1a2a9a" stroke-width="1.4"/>
<rect x="766" y="283" width="13" height="3" fill="#1a2a9a"/>
<rect x="770" y="288" width="4" height="3.5" fill="#cfcfcf" stroke="#222" stroke-width="0.8"/>
<rect x="775" y="288" width="4" height="3.5" fill="#cfcfcf" stroke="#222" stroke-width="0.8"/>
<rect x="770" y="292.5" width="4" height="3.5" fill="#cfcfcf" stroke="#222" stroke-width="0.8"/>
<rect x="775" y="292.5" width="4" height="3.5" fill="#cfcfcf" stroke="#222" stroke-width="0.8"/>
<rect x="777" y="287" width="5" height="9" fill="#c5c5c5" opacity="0.6"/>
<rect x="776.5" y="288" width="4" height="3.5" fill="#cfcfcf" stroke="#222" stroke-width="0.8"/>
<rect x="776.5" y="292.5" width="4" height="3.5" fill="#cfcfcf" stroke="#222" stroke-width="0.8"/>
<g shape-rendering="crispEdges">
<rect x="622" y="312" width="175" height="1" fill="#e8e8e8"/>
<rect x="622" y="313" width="175" height="1" fill="#080808"/>
<rect x="622" y="314" width="175" height="1" fill="#9a9a9a"/>
<rect x="622" y="323" width="1" height="325" fill="#d8d8d8"/>
<rect x="621" y="322" width="175" height="1" fill="#8a8a8a"/>
<rect x="621" y="322" width="1" height="326" fill="#8a8a8a"/>
<rect x="621" y="647" width="176" height="1" fill="#f4f4f4"/>
<rect x="796" y="322" width="1" height="326" fill="#f4f4f4"/>
<rect x="617" y="653" width="184" height="1" fill="#9a9a9a"/>
<rect x="791" y="323" width="4" height="57" fill="#707070"/>
<rect x="791" y="380" width="4" height="267" fill="#000"/>
<rect x="792" y="345" width="2" height="1" fill="#f4f4f4"/>
<rect x="792" y="348" width="2" height="1" fill="#f4f4f4"/>
<rect x="792" y="351" width="2" height="1" fill="#f4f4f4"/>
<rect x="792" y="354" width="2" height="1" fill="#f4f4f4"/>
</g>
<g shape-rendering="crispEdges">
<rect x="624" y="335" width="1" height="225" fill="#808080"/>
<rect x="625" y="335" width="1" height="225" fill="#f4f4f4"/>
<rect x="788" y="335" width="1" height="225" fill="#808080"/>
<rect x="789" y="335" width="1" height="225" fill="#f4f4f4"/>
<rect x="624" y="559" width="165" height="1" fill="#808080"/>
<rect x="624" y="560" width="166" height="1" fill="#f4f4f4"/>
<rect x="624" y="335" width="4" height="1" fill="#808080"/>
<rect x="785" y="335" width="4" height="1" fill="#808080"/>
</g>
<g shape-rendering="crispEdges">
<rect x="628" y="327" width="158" height="16" fill="#000"/>
<rect x="629" y="328" width="156" height="14" fill="#b3b3b3"/>
<rect x="629" y="328" width="156" height="1" fill="#d0d0d0"/>
<rect x="629" y="328" width="1" height="14" fill="#d0d0d0"/>
</g>
<text x="633.5" y="339" font-size="12" fill="#000">-</text>
<text x="707.5" y="339" font-size="12" fill="#000" text-anchor="middle" textLength="44" lengthAdjust="spacingAndGlyphs">Selection</text>
<path d="M648.5,358.5 L652.5,358.5 M650.5,356.5 L650.5,360.5" stroke="#f00000" stroke-width="1.1"/>
<path d="M659.5,351.5 L663.5,351.5 M661.5,349.5 L661.5,353.5" stroke="#f00000" stroke-width="1.1"/>
<path d="M654.5,362.5 L658.5,362.5 M656.5,360.5 L656.5,364.5" stroke="#f00000" stroke-width="1.1"/>
<polygon points="673.2,358.3 687.8,351.3 682.5,362.5" fill="none" stroke="#f00000" stroke-width="1.1"/>
<path d="M701,349.6 C705.5,348.6 708.5,352 707.3,357 C706.5,361 705.5,364.5 701.5,364.4 C697.5,364 698,360.5 699.5,358 C700.5,356 698,354.5 698.3,352.5 C698.5,351 699.5,350 701,349.6 Z" fill="none" stroke="#f00000" stroke-width="1.1"/>
<rect x="722" y="351" width="12" height="11.6" fill="#f00000" stroke="#300000" stroke-width="0.9"/>
<polygon points="745.5,355.3 749.5,351.3 757.7,351.3 753.7,355.3" fill="#ff2020" stroke="#200000" stroke-width="0.8"/>
<polygon points="753.7,355.3 757.7,351.3 757.7,358.8 753.7,362.8" fill="#8a1aa8" stroke="#200000" stroke-width="0.8"/>
<rect x="745.5" y="355.3" width="8.2" height="7.5" fill="#f00000" stroke="#200000" stroke-width="0.8"/>
<g shape-rendering="crispEdges">
<rect x="635" y="376" width="12" height="12" fill="#cdcdcd"/>
<rect x="635" y="376" width="12" height="1" fill="#7a7a7a"/>
<rect x="635" y="376" width="1" height="12" fill="#7a7a7a"/>
<rect x="636" y="377" width="10" height="1" fill="#5a5a5a"/>
<rect x="636" y="377" width="1" height="10" fill="#5a5a5a"/>
<rect x="635" y="387" width="12" height="1" fill="#ffffff"/>
<rect x="646" y="376" width="1" height="12" fill="#ffffff"/>
</g>
<text x="653.5" y="386.5" font-size="12" fill="#ffffff" textLength="45" lengthAdjust="spacingAndGlyphs">By Vertex</text>
<text x="652.5" y="385.5" font-size="12" fill="#7c7c7c" textLength="45" lengthAdjust="spacingAndGlyphs">By Vertex</text>
<g shape-rendering="crispEdges">
<rect x="635" y="395" width="12" height="12" fill="#cdcdcd"/>
<rect x="635" y="395" width="12" height="1" fill="#7a7a7a"/>
<rect x="635" y="395" width="1" height="12" fill="#7a7a7a"/>
<rect x="636" y="396" width="10" height="1" fill="#5a5a5a"/>
<rect x="636" y="396" width="1" height="10" fill="#5a5a5a"/>
<rect x="635" y="406" width="12" height="1" fill="#ffffff"/>
<rect x="646" y="395" width="1" height="12" fill="#ffffff"/>
</g>
<text x="653.5" y="405.5" font-size="12" fill="#ffffff" textLength="87" lengthAdjust="spacingAndGlyphs">Ignore Backfacing</text>
<text x="652.5" y="404.5" font-size="12" fill="#7c7c7c" textLength="87" lengthAdjust="spacingAndGlyphs">Ignore Backfacing</text>
<g shape-rendering="crispEdges">
<rect x="635" y="414" width="12" height="12" fill="#cdcdcd"/>
<rect x="635" y="414" width="12" height="1" fill="#7a7a7a"/>
<rect x="635" y="414" width="1" height="12" fill="#7a7a7a"/>
<rect x="636" y="415" width="10" height="1" fill="#5a5a5a"/>
<rect x="636" y="415" width="1" height="10" fill="#5a5a5a"/>
<rect x="635" y="425" width="12" height="1" fill="#ffffff"/>
<rect x="646" y="414" width="1" height="12" fill="#ffffff"/>
</g>
<text x="653.5" y="425" font-size="12" fill="#ffffff" textLength="44" lengthAdjust="spacingAndGlyphs">By Angle:</text>
<text x="652.5" y="424" font-size="12" fill="#7c7c7c" textLength="44" lengthAdjust="spacingAndGlyphs">By Angle:</text>
<rect x="702" y="414" width="67" height="15" fill="#dedede"/>
<rect x="702" y="414" width="67" height="1" fill="#2a2a2a"/>
<rect x="702" y="414" width="1" height="15" fill="#2a2a2a"/>
<rect x="702" y="428" width="67" height="1" fill="#ffffff"/>
<rect x="768" y="414" width="1" height="15" fill="#ffffff"/>
<rect x="703" y="415" width="65" height="1" fill="#7a7a7a"/>
<rect x="703" y="415" width="1" height="13" fill="#7a7a7a"/>
<text x="707" y="426" font-size="12" fill="#ffffff" textLength="20" lengthAdjust="spacingAndGlyphs">45,0</text>
<text x="706" y="425" font-size="12" fill="#7c7c7c" textLength="20" lengthAdjust="spacingAndGlyphs">45,0</text>
<rect x="771" y="414" width="10" height="15" fill="#c5c5c5"/>
<rect x="771" y="414" width="10" height="1" fill="#ffffff"/>
<rect x="771" y="414" width="1" height="15" fill="#ffffff"/>
<rect x="771" y="428" width="10" height="1" fill="#7a7a7a"/>
<rect x="780" y="414" width="1" height="15" fill="#7a7a7a"/>
<polygon points="773.5,420 778.5,420 776.0,416.5" fill="#000" stroke="none" stroke-width="1"/>
<polygon points="773.5,423 778.5,423 776.0,426.5" fill="#000" stroke="none" stroke-width="1"/>
<g shape-rendering="crispEdges">
<rect x="634" y="432" width="72" height="18" fill="#c8c8c8"/>
<rect x="634" y="432" width="72" height="1" fill="#f6f6f6"/>
<rect x="634" y="432" width="1" height="18" fill="#f6f6f6"/>
<rect x="634" y="449" width="72" height="1" fill="#6e6e6e"/>
<rect x="705" y="432" width="1" height="18" fill="#6e6e6e"/>
</g>
<text x="671.0" y="446" font-size="12" fill="#ffffff" text-anchor="middle" textLength="29" lengthAdjust="spacingAndGlyphs">Shrink</text>
<text x="670.0" y="445" font-size="12" fill="#7c7c7c" text-anchor="middle" textLength="29" lengthAdjust="spacingAndGlyphs">Shrink</text>
<g shape-rendering="crispEdges">
<rect x="713" y="432" width="71" height="18" fill="#c8c8c8"/>
<rect x="713" y="432" width="71" height="1" fill="#f6f6f6"/>
<rect x="713" y="432" width="1" height="18" fill="#f6f6f6"/>
<rect x="713" y="449" width="71" height="1" fill="#6e6e6e"/>
<rect x="783" y="432" width="1" height="18" fill="#6e6e6e"/>
</g>
<text x="749.5" y="446" font-size="12" fill="#ffffff" text-anchor="middle" textLength="24" lengthAdjust="spacingAndGlyphs">Grow</text>
<text x="748.5" y="445" font-size="12" fill="#7c7c7c" text-anchor="middle" textLength="24" lengthAdjust="spacingAndGlyphs">Grow</text>
<g shape-rendering="crispEdges">
<rect x="634" y="455" width="57" height="18" fill="#c8c8c8"/>
<rect x="634" y="455" width="57" height="1" fill="#f6f6f6"/>
<rect x="634" y="455" width="1" height="18" fill="#f6f6f6"/>
<rect x="634" y="472" width="57" height="1" fill="#6e6e6e"/>
<rect x="690" y="455" width="1" height="18" fill="#6e6e6e"/>
</g>
<text x="663.5" y="469" font-size="12" fill="#ffffff" text-anchor="middle" textLength="22" lengthAdjust="spacingAndGlyphs">Ring</text>
<text x="662.5" y="468" font-size="12" fill="#7c7c7c" text-anchor="middle" textLength="22" lengthAdjust="spacingAndGlyphs">Ring</text>
<rect x="695" y="456" width="10" height="16" fill="#c5c5c5"/>
<rect x="695" y="456" width="10" height="1" fill="#ffffff"/>
<rect x="695" y="456" width="1" height="16" fill="#ffffff"/>
<rect x="695" y="471" width="10" height="1" fill="#7a7a7a"/>
<rect x="704" y="456" width="1" height="16" fill="#7a7a7a"/>
<polygon points="697.5,462 702.5,462 700.0,458.5" fill="#000" stroke="none" stroke-width="1"/>
<polygon points="697.5,466 702.5,466 700.0,469.5" fill="#000" stroke="none" stroke-width="1"/>
<g shape-rendering="crispEdges">
<rect x="713" y="455" width="58" height="18" fill="#c8c8c8"/>
<rect x="713" y="455" width="58" height="1" fill="#f6f6f6"/>
<rect x="713" y="455" width="1" height="18" fill="#f6f6f6"/>
<rect x="713" y="472" width="58" height="1" fill="#6e6e6e"/>
<rect x="770" y="455" width="1" height="18" fill="#6e6e6e"/>
</g>
<text x="743.0" y="469" font-size="12" fill="#ffffff" text-anchor="middle" textLength="23" lengthAdjust="spacingAndGlyphs">Loop</text>
<text x="742.0" y="468" font-size="12" fill="#7c7c7c" text-anchor="middle" textLength="23" lengthAdjust="spacingAndGlyphs">Loop</text>
<rect x="774" y="456" width="10" height="16" fill="#c5c5c5"/>
<rect x="774" y="456" width="10" height="1" fill="#ffffff"/>
<rect x="774" y="456" width="1" height="16" fill="#ffffff"/>
<rect x="774" y="471" width="10" height="1" fill="#7a7a7a"/>
<rect x="783" y="456" width="1" height="16" fill="#7a7a7a"/>
<polygon points="776.5,462 781.5,462 779.0,458.5" fill="#000" stroke="none" stroke-width="1"/>
<polygon points="776.5,466 781.5,466 779.0,469.5" fill="#000" stroke="none" stroke-width="1"/>
<rect x="628.5" y="483.5" width="157" height="31" fill="none" stroke="#ffffff"/>
<rect x="627.5" y="482.5" width="157" height="31" fill="none" stroke="#808080"/>
<rect x="633" y="478" width="89" height="11" fill="#c5c5c5"/>
<text x="635.3" y="487" font-size="12" fill="#000" textLength="84.5" lengthAdjust="spacingAndGlyphs">Preview Selection</text>
<circle cx="634.5" cy="500" r="5" fill="#ffffff" stroke="#6a6a6a" stroke-width="1"/>
<path d="M630.9,503.6 A5.1,5.1 0 0 1 638.1,496.4" fill="none" stroke="#404040" stroke-width="1.2"/>
<circle cx="634.5" cy="500" r="2.2" fill="#000"/>
<text x="646.5" y="505" font-size="12" fill="#000" textLength="14" lengthAdjust="spacingAndGlyphs">Off</text>
<circle cx="683.5" cy="500" r="5" fill="#ffffff" stroke="#6a6a6a" stroke-width="1"/>
<path d="M679.9,503.6 A5.1,5.1 0 0 1 687.1,496.4" fill="none" stroke="#404040" stroke-width="1.2"/>
<circle cx="683.5" cy="500" r="3.6" fill="#d8d8d8"/>
<text x="696.5" y="506" font-size="12" fill="#ffffff" textLength="35" lengthAdjust="spacingAndGlyphs">SubObj</text>
<text x="695.5" y="505" font-size="12" fill="#7c7c7c" textLength="35" lengthAdjust="spacingAndGlyphs">SubObj</text>
<circle cx="745.5" cy="500" r="5" fill="#ffffff" stroke="#6a6a6a" stroke-width="1"/>
<path d="M741.9,503.6 A5.1,5.1 0 0 1 749.1,496.4" fill="none" stroke="#404040" stroke-width="1.2"/>
<circle cx="745.5" cy="500" r="3.6" fill="#d8d8d8"/>
<text x="758.3" y="506" font-size="12" fill="#ffffff" textLength="22.5" lengthAdjust="spacingAndGlyphs">Multi</text>
<text x="757.3" y="505" font-size="12" fill="#7c7c7c" textLength="22.5" lengthAdjust="spacingAndGlyphs">Multi</text>
<text x="723" y="532.5" font-size="12" fill="#000" text-anchor="middle" textLength="110" lengthAdjust="spacingAndGlyphs">Whole Object Selected</text>
<g shape-rendering="crispEdges">
<rect x="624" y="572" width="1" height="7" fill="#808080"/>
<rect x="625" y="572" width="1" height="7" fill="#f4f4f4"/>
<rect x="788" y="572" width="1" height="7" fill="#808080"/>
<rect x="789" y="572" width="1" height="7" fill="#f4f4f4"/>
</g>
<g shape-rendering="crispEdges">
<rect x="628" y="567" width="158" height="16" fill="#000"/>
<rect x="629" y="568" width="156" height="14" fill="#b3b3b3"/>
<rect x="629" y="568" width="156" height="1" fill="#d0d0d0"/>
<rect x="629" y="568" width="1" height="14" fill="#d0d0d0"/>
</g>
<text x="633.5" y="579" font-size="12" fill="#000" font-weight="bold">+</text>
<text x="707.5" y="579" font-size="12" fill="#000" text-anchor="middle" textLength="66" lengthAdjust="spacingAndGlyphs">Soft Selection</text>
<g shape-rendering="crispEdges">
<rect x="624" y="595" width="1" height="52" fill="#808080"/>
<rect x="625" y="595" width="1" height="53" fill="#f4f4f4"/>
<rect x="788" y="595" width="1" height="52" fill="#808080"/>
<rect x="789" y="595" width="1" height="53" fill="#f4f4f4"/>
</g>
<g shape-rendering="crispEdges">
<rect x="628" y="587" width="158" height="16" fill="#000"/>
<rect x="629" y="588" width="156" height="14" fill="#b3b3b3"/>
<rect x="629" y="588" width="156" height="1" fill="#d0d0d0"/>
<rect x="629" y="588" width="1" height="14" fill="#d0d0d0"/>
</g>
<text x="633.5" y="599" font-size="12" fill="#000">-</text>
<text x="707.5" y="599" font-size="12" fill="#000" text-anchor="middle" textLength="66" lengthAdjust="spacingAndGlyphs">Edit Geometry</text>
<g shape-rendering="crispEdges">
<rect x="632" y="608" width="150" height="18" fill="#c8c8c8"/>
<rect x="632" y="608" width="150" height="1" fill="#f6f6f6"/>
<rect x="632" y="608" width="1" height="18" fill="#f6f6f6"/>
<rect x="632" y="625" width="150" height="1" fill="#6e6e6e"/>
<rect x="781" y="608" width="1" height="18" fill="#6e6e6e"/>
</g>
<text x="707" y="621" font-size="12" fill="#000" text-anchor="middle" textLength="58" lengthAdjust="spacingAndGlyphs">Repeat Last</text>
<clipPath id="cpC"><rect x="624" y="626" width="166" height="21"/></clipPath>
<g clip-path="url(#cpC)">
<rect x="632.5" y="633.5" width="151" height="29" fill="none" stroke="#ffffff"/>
<rect x="631.5" y="632.5" width="151" height="29" fill="none" stroke="#808080"/>
<rect x="638" y="628" width="56" height="11" fill="#c5c5c5"/>
<text x="640.5" y="637" font-size="12" fill="#000" textLength="52" lengthAdjust="spacingAndGlyphs">Constraints</text>
<circle cx="646" cy="651.5" r="5" fill="#fff" stroke="#555"/><circle cx="707" cy="651.5" r="5" fill="#fff" stroke="#555"/>
<text x="660" y="656" font-size="12" fill="#000">None</text>
<text x="719" y="656" font-size="12" fill="#000">Edge</text>
</g>
<g shape-rendering="crispEdges">
<rect x="2" y="610" width="15" height="16" fill="#c9c9c9"/>
<rect x="2" y="610" width="15" height="1" fill="#f4f4f4"/>
<rect x="2" y="610" width="1" height="16" fill="#f4f4f4"/>
<rect x="2" y="625" width="15" height="1" fill="#7a7a7a"/>
<rect x="16" y="610" width="1" height="16" fill="#7a7a7a"/>
<rect x="18" y="610" width="124" height="16" fill="#c9c9c9"/>
<rect x="18" y="610" width="124" height="1" fill="#f4f4f4"/>
<rect x="18" y="610" width="1" height="16" fill="#f4f4f4"/>
<rect x="18" y="625" width="124" height="1" fill="#1a1a1a"/>
<rect x="141" y="610" width="1" height="16" fill="#1a1a1a"/>
<rect x="19" y="624" width="123" height="1" fill="#3a3a3a"/>
<rect x="143" y="610" width="14" height="16" fill="#c9c9c9"/>
<rect x="143" y="610" width="14" height="1" fill="#f4f4f4"/>
<rect x="143" y="610" width="1" height="16" fill="#f4f4f4"/>
<rect x="143" y="625" width="14" height="1" fill="#7a7a7a"/>
<rect x="156" y="610" width="1" height="16" fill="#7a7a7a"/>
<rect x="1" y="627" width="617" height="1" fill="#ececec"/>
<rect x="1" y="628" width="617" height="1" fill="#8e8e8e"/>
<rect x="616" y="626" width="1" height="1" fill="#111"/>
</g>
<path d="M10.8,614.3 L6.6,618 L10.8,621.7" fill="none" stroke="#111" stroke-width="1.1"/>
<path d="M146.8,614.3 L151,618 L146.8,621.7" fill="none" stroke="#111" stroke-width="1.1"/>
<text x="80" y="622" font-size="12" fill="#000" text-anchor="middle" textLength="36" lengthAdjust="spacingAndGlyphs">0 / 100</text>
<g shape-rendering="crispEdges">
<rect x="50" y="629" width="9" height="26" fill="#8fb0d6"/>
<rect x="50" y="629" width="1" height="26" fill="#6a7f9c"/>
<rect x="58" y="629" width="1" height="26" fill="#6a7f9c"/>
<rect x="54" y="629" width="1" height="25" fill="#707070"/>
<rect x="64" y="629" width="1" height="11" fill="#707070"/>
<rect x="74" y="629" width="1" height="11" fill="#707070"/>
<rect x="85" y="629" width="1" height="11" fill="#707070"/>
<rect x="95" y="629" width="1" height="11" fill="#707070"/>
<rect x="105" y="629" width="1" height="25" fill="#707070"/>
<rect x="115" y="629" width="1" height="11" fill="#707070"/>
<rect x="125" y="629" width="1" height="11" fill="#707070"/>
<rect x="136" y="629" width="1" height="11" fill="#707070"/>
<rect x="146" y="629" width="1" height="11" fill="#707070"/>
<rect x="156" y="629" width="1" height="25" fill="#707070"/>
<rect x="166" y="629" width="1" height="11" fill="#707070"/>
<rect x="176" y="629" width="1" height="11" fill="#707070"/>
<rect x="187" y="629" width="1" height="11" fill="#707070"/>
<rect x="197" y="629" width="1" height="11" fill="#707070"/>
<rect x="207" y="629" width="1" height="25" fill="#707070"/>
<rect x="217" y="629" width="1" height="11" fill="#707070"/>
<rect x="227" y="629" width="1" height="11" fill="#707070"/>
<rect x="238" y="629" width="1" height="11" fill="#707070"/>
<rect x="248" y="629" width="1" height="11" fill="#707070"/>
<rect x="258" y="629" width="1" height="25" fill="#707070"/>
<rect x="268" y="629" width="1" height="11" fill="#707070"/>
<rect x="278" y="629" width="1" height="11" fill="#707070"/>
<rect x="289" y="629" width="1" height="11" fill="#707070"/>
<rect x="299" y="629" width="1" height="11" fill="#707070"/>
<rect x="309" y="629" width="1" height="25" fill="#707070"/>
<rect x="319" y="629" width="1" height="11" fill="#707070"/>
<rect x="329" y="629" width="1" height="11" fill="#707070"/>
<rect x="339" y="629" width="1" height="11" fill="#707070"/>
<rect x="350" y="629" width="1" height="11" fill="#707070"/>
<rect x="360" y="629" width="1" height="25" fill="#707070"/>
<rect x="370" y="629" width="1" height="11" fill="#707070"/>
<rect x="380" y="629" width="1" height="11" fill="#707070"/>
<rect x="390" y="629" width="1" height="11" fill="#707070"/>
<rect x="401" y="629" width="1" height="11" fill="#707070"/>
<rect x="411" y="629" width="1" height="25" fill="#707070"/>
<rect x="421" y="629" width="1" height="11" fill="#707070"/>
<rect x="431" y="629" width="1" height="11" fill="#707070"/>
<rect x="441" y="629" width="1" height="11" fill="#707070"/>
<rect x="452" y="629" width="1" height="11" fill="#707070"/>
<rect x="462" y="629" width="1" height="25" fill="#707070"/>
<rect x="472" y="629" width="1" height="11" fill="#707070"/>
<rect x="482" y="629" width="1" height="11" fill="#707070"/>
<rect x="492" y="629" width="1" height="11" fill="#707070"/>
<rect x="503" y="629" width="1" height="11" fill="#707070"/>
<rect x="513" y="629" width="1" height="25" fill="#707070"/>
<rect x="523" y="629" width="1" height="11" fill="#707070"/>
<rect x="533" y="629" width="1" height="11" fill="#707070"/>
<rect x="543" y="629" width="1" height="11" fill="#707070"/>
<rect x="554" y="629" width="1" height="11" fill="#707070"/>
<rect x="564" y="629" width="1" height="25" fill="#707070"/>
<rect x="1" y="654" width="616" height="1" fill="#dadada"/>
</g>
<text x="54.6" y="651" font-size="11" fill="#1a3a6a" text-anchor="middle">0</text>
<text x="105.6" y="651" font-size="11" fill="#111" text-anchor="middle" stroke="#c5c5c5" stroke-width="0" >10</text>
<text x="156.5" y="651" font-size="11" fill="#111" text-anchor="middle" stroke="#c5c5c5" stroke-width="0" >20</text>
<text x="207.5" y="651" font-size="11" fill="#111" text-anchor="middle" stroke="#c5c5c5" stroke-width="0" >30</text>
<text x="258.4" y="651" font-size="11" fill="#111" text-anchor="middle" stroke="#c5c5c5" stroke-width="0" >40</text>
<text x="309.4" y="651" font-size="11" fill="#111" text-anchor="middle" stroke="#c5c5c5" stroke-width="0" >50</text>
<text x="360.4" y="651" font-size="11" fill="#111" text-anchor="middle" stroke="#c5c5c5" stroke-width="0" >60</text>
<text x="411.3" y="651" font-size="11" fill="#111" text-anchor="middle" stroke="#c5c5c5" stroke-width="0" >70</text>
<text x="462.3" y="651" font-size="11" fill="#111" text-anchor="middle" stroke="#c5c5c5" stroke-width="0" >80</text>
<text x="513.2" y="651" font-size="11" fill="#111" text-anchor="middle" stroke="#c5c5c5" stroke-width="0" >90</text>
<text x="564.2" y="651" font-size="11" fill="#111" text-anchor="middle" stroke="#c5c5c5" stroke-width="0" >100</text>
<g shape-rendering="crispEdges">
<rect x="14" y="633" width="17" height="5" fill="#e0e0e0" stroke="#111" stroke-width="1"/>
<rect x="14" y="645" width="17" height="3" fill="#e0e0e0" stroke="#111" stroke-width="1"/>
<rect x="18" y="640" width="1" height="5" fill="#111"/>
<rect x="27" y="640" width="1" height="5" fill="#111"/>
</g>
<path d="M15,636 C18,633 20,638 23,635.5 C26,633 28,637 30,635" fill="none" stroke="#111" stroke-width="0.9"/>
<polygon points="15.5,642.5 21.5,642.5 18.5,639.5" fill="#111" stroke="none" stroke-width="1"/>
<polygon points="24.5,641.5 30.5,641.5 27.5,644.5" fill="#111" stroke="none" stroke-width="1"/>
<g shape-rendering="crispEdges">
<rect x="1" y="656" width="1" height="47" fill="#9a9a9a"/>
<rect x="2" y="656" width="1" height="47" fill="#e8e8e8"/>
<rect x="3" y="657" width="96" height="21" fill="#dcc1c2"/>
<rect x="3" y="657" width="96" height="1" fill="#6a6a6a"/>
<rect x="3" y="657" width="1" height="21" fill="#6a6a6a"/>
<rect x="3" y="677" width="96" height="1" fill="#f4f4f4"/>
<rect x="98" y="657" width="1" height="21" fill="#f4f4f4"/>
<rect x="3" y="681" width="96" height="20" fill="#ffffff"/>
<rect x="3" y="681" width="96" height="1" fill="#6a6a6a"/>
<rect x="3" y="681" width="1" height="20" fill="#6a6a6a"/>
<rect x="3" y="700" width="96" height="1" fill="#e8e8e8"/>
<rect x="98" y="681" width="1" height="20" fill="#e8e8e8"/>
</g>
<clipPath id="cpL"><rect x="5" y="682" width="92" height="18"/></clipPath>
<text x="15.3" y="693" font-size="12" fill="#000" textLength="76.5" lengthAdjust="spacingAndGlyphs" class="mono" stroke="#000" stroke-width="0.25">rter contex</text>
<rect x="14" y="688" width="1" height="3" fill="#4a6a9a"/>
<g shape-rendering="crispEdges">
<rect x="102" y="656" width="3" height="47" fill="#e6e6e6"/>
<rect x="105" y="656" width="1" height="47" fill="#6a6a6a"/>
</g>
<rect x="115.5" y="666.5" width="7.5" height="6.5" fill="#e0e0e0" stroke="#111" stroke-width="1"/>
<path d="M117.3,666.5 L117.3,664.2 C117.3,661 121.2,661 121.2,664.2 L121.2,666.5" fill="none" stroke="#111" stroke-width="1.2"/>
<rect x="115" y="668" width="8.5" height="1" fill="#111"/>
<rect x="115" y="670" width="8.5" height="1" fill="#111"/>
<rect x="115" y="672" width="8.5" height="1" fill="#111"/>
<rect x="139.7" y="660.7" width="14" height="14" fill="#c8c8c8" stroke="#111" stroke-width="1.3"/>
<line x1="146.7" y1="661" x2="146.7" y2="674.5" stroke="#555" stroke-width="0.8"/>
<line x1="140" y1="667.7" x2="153.5" y2="667.7" stroke="#555" stroke-width="0.8"/>
<circle cx="146.7" cy="667.7" r="2.1" fill="#777" stroke="#111" stroke-width="0.9"/>
<text x="161.5" y="672.5" font-size="12" fill="#000" textLength="9" lengthAdjust="spacingAndGlyphs">X:</text>
<g shape-rendering="crispEdges">
<rect x="172" y="659" width="57" height="19" fill="#dedede"/>
<rect x="172" y="659" width="57" height="1" fill="#1a1a1a"/>
<rect x="172" y="660" width="57" height="1" fill="#4a4a4a"/>
<rect x="172" y="659" width="1" height="19" fill="#1a1a1a"/>
<rect x="173" y="659" width="1" height="19" fill="#4a4a4a"/>
<rect x="172" y="677" width="57" height="1" fill="#f6f6f6"/>
<rect x="228" y="659" width="1" height="19" fill="#f6f6f6"/>
</g>
<text x="176.5" y="672.5" font-size="12" fill="#000" textLength="22.5" lengthAdjust="spacingAndGlyphs">0,0m</text>
<rect x="231" y="661" width="10" height="14" fill="#c5c5c5"/>
<rect x="231" y="661" width="10" height="1" fill="#ffffff"/>
<rect x="231" y="661" width="1" height="14" fill="#ffffff"/>
<rect x="231" y="674" width="10" height="1" fill="#7a7a7a"/>
<rect x="240" y="661" width="1" height="14" fill="#7a7a7a"/>
<polygon points="233.5,667 238.5,667 236.0,663.5" fill="#000" stroke="none" stroke-width="1"/>
<polygon points="233.5,669 238.5,669 236.0,672.5" fill="#000" stroke="none" stroke-width="1"/>
<text x="244.5" y="672.5" font-size="12" fill="#000" textLength="9" lengthAdjust="spacingAndGlyphs">Y:</text>
<g shape-rendering="crispEdges">
<rect x="255" y="659" width="56" height="19" fill="#dedede"/>
<rect x="255" y="659" width="56" height="1" fill="#1a1a1a"/>
<rect x="255" y="660" width="56" height="1" fill="#4a4a4a"/>
<rect x="255" y="659" width="1" height="19" fill="#1a1a1a"/>
<rect x="256" y="659" width="1" height="19" fill="#4a4a4a"/>
<rect x="255" y="677" width="56" height="1" fill="#f6f6f6"/>
<rect x="310" y="659" width="1" height="19" fill="#f6f6f6"/>
</g>
<text x="259.5" y="672.5" font-size="12" fill="#000" textLength="22.5" lengthAdjust="spacingAndGlyphs">0,0m</text>
<rect x="313" y="661" width="10" height="14" fill="#c5c5c5"/>
<rect x="313" y="661" width="10" height="1" fill="#ffffff"/>
<rect x="313" y="661" width="1" height="14" fill="#ffffff"/>
<rect x="313" y="674" width="10" height="1" fill="#7a7a7a"/>
<rect x="322" y="661" width="1" height="14" fill="#7a7a7a"/>
<polygon points="315.5,667 320.5,667 318.0,663.5" fill="#000" stroke="none" stroke-width="1"/>
<polygon points="315.5,669 320.5,669 318.0,672.5" fill="#000" stroke="none" stroke-width="1"/>
<text x="326" y="672.5" font-size="12" fill="#000" textLength="9" lengthAdjust="spacingAndGlyphs">Z:</text>
<g shape-rendering="crispEdges">
<rect x="336" y="659" width="24" height="19" fill="#dedede"/>
<rect x="336" y="659" width="24" height="1" fill="#1a1a1a"/>
<rect x="336" y="660" width="24" height="1" fill="#4a4a4a"/>
<rect x="336" y="659" width="1" height="19" fill="#1a1a1a"/>
<rect x="337" y="659" width="1" height="19" fill="#4a4a4a"/>
<rect x="336" y="677" width="24" height="1" fill="#f6f6f6"/>
</g>
<text x="340.5" y="672.5" font-size="12" fill="#000" textLength="22.5" lengthAdjust="spacingAndGlyphs">0,0m</text>
<g shape-rendering="crispEdges">
<rect x="109" y="683" width="251" height="19" fill="#c9c9c9"/>
<rect x="109" y="683" width="251" height="1" fill="#6e6e6e"/>
<rect x="109" y="683" width="1" height="19" fill="#6e6e6e"/>
<rect x="109" y="701" width="251" height="1" fill="#f4f4f4"/>
</g>
<text x="114.5" y="697" font-size="12" fill="#000" textLength="198" lengthAdjust="spacingAndGlyphs">Click and drag to select and move objects</text>
<g shape-rendering="crispEdges">
<rect x="360" y="657" width="43" height="44" fill="#c8c8c8"/>
<rect x="360" y="657" width="43" height="1" fill="#f8f8f8"/>
<rect x="360" y="657" width="1" height="44" fill="#f8f8f8"/>
<rect x="360" y="700" width="43" height="1" fill="#6a6a6a"/>
<rect x="402" y="657" width="1" height="44" fill="#6a6a6a"/>
<rect x="401" y="658" width="1" height="42" fill="#9a9a9a"/>
<rect x="361" y="699" width="41" height="1" fill="#9a9a9a"/>
</g>
<circle cx="373.2" cy="678.8" r="4" fill="none" stroke="#000" stroke-width="2"/>
<rect x="377.5" y="677.5" width="15.5" height="2.5" fill="#000"/>
<rect x="386.5" y="679.5" width="2.2" height="4" fill="#000"/>
<rect x="390.3" y="679.5" width="2.7" height="4.5" fill="#000"/>
<g shape-rendering="crispEdges">
<rect x="407" y="657" width="47" height="21" fill="#c8c8c8"/>
<rect x="407" y="657" width="47" height="1" fill="#f8f8f8"/>
<rect x="407" y="657" width="1" height="21" fill="#f8f8f8"/>
<rect x="407" y="677" width="47" height="1" fill="#6a6a6a"/>
<rect x="453" y="657" width="1" height="21" fill="#6a6a6a"/>
</g>
<text x="409.5" y="672.5" font-size="12" fill="#000" textLength="42.5" lengthAdjust="spacingAndGlyphs">Auto Key</text>
<g shape-rendering="crispEdges">
<rect x="407" y="680" width="47" height="21" fill="#c8c8c8"/>
<rect x="407" y="680" width="47" height="1" fill="#f8f8f8"/>
<rect x="407" y="680" width="1" height="21" fill="#f8f8f8"/>
<rect x="407" y="700" width="47" height="1" fill="#6a6a6a"/>
<rect x="453" y="680" width="1" height="21" fill="#6a6a6a"/>
</g>
<text x="413" y="695.5" font-size="12" fill="#000" textLength="36" lengthAdjust="spacingAndGlyphs">Set Key</text>
<g shape-rendering="crispEdges">
<rect x="457" y="658" width="114" height="20" fill="#ececec"/>
<rect x="457" y="658" width="114" height="1" fill="#5a5a5a"/>
<rect x="457" y="659" width="114" height="1" fill="#8a8a8a"/>
<rect x="457" y="658" width="1" height="20" fill="#5a5a5a"/>
<rect x="458" y="658" width="1" height="20" fill="#8a8a8a"/>
<rect x="457" y="677" width="114" height="1" fill="#fafafa"/>
<rect x="570" y="658" width="1" height="20" fill="#fafafa"/>
</g>
<rect x="554" y="660" width="15" height="16" fill="#f0f0f0"/>
<rect x="554" y="660" width="15" height="1" fill="#ffffff"/>
<rect x="554" y="660" width="1" height="16" fill="#ffffff"/>
<rect x="554" y="675" width="15" height="1" fill="#8a8a8a"/>
<rect x="568" y="660" width="1" height="16" fill="#8a8a8a"/>
<polygon points="557.5,665.5 565.5,665.5 561.5,669.5" fill="#000" stroke="none" stroke-width="1"/>
<text x="461.5" y="672" font-size="12" fill="#000" textLength="41.5" lengthAdjust="spacingAndGlyphs">Selected</text>
<line x1="466" y1="685.3" x2="475.5" y2="685.3" stroke="#6a6ad0" stroke-width="1.2"/>
<line x1="460" y1="697.2" x2="469.5" y2="697.2" stroke="#6a6ad0" stroke-width="1.2"/>
<path d="M461,687.5 L465.5,696.8 L470.5,685.6 L475,692.5" fill="none" stroke="#d02020" stroke-width="1.3"/>
<polygon points="478,698 478,701 475,701" fill="#000" stroke="none" stroke-width="1"/>
<g shape-rendering="crispEdges">
<rect x="483" y="680" width="90" height="21" fill="#c8c8c8"/>
<rect x="483" y="680" width="90" height="1" fill="#f8f8f8"/>
<rect x="483" y="680" width="1" height="21" fill="#f8f8f8"/>
<rect x="483" y="700" width="90" height="1" fill="#6a6a6a"/>
<rect x="572" y="680" width="1" height="21" fill="#6a6a6a"/>
</g>
<text x="500.5" y="695.5" font-size="12" fill="#000" textLength="56" lengthAdjust="spacingAndGlyphs">Key Filters...</text>
<rect x="581" y="663.5" width="2.2" height="9" fill="#000"/>
<polygon points="590,663.5 590,672.5 583,668.0" fill="#000" stroke="none" stroke-width="1"/>
<polygon points="597,663.5 597,672.5 590,668.0" fill="#000" stroke="none" stroke-width="1"/>
<rect x="586" y="667" width="11" height="2" fill="#000"/>
<g shape-rendering="crispEdges">
<rect x="602" y="660" width="1" height="17" fill="#8a8a8a"/>
<rect x="603" y="660" width="1" height="17" fill="#f4f4f4"/>
<rect x="674" y="660" width="1" height="17" fill="#8a8a8a"/>
<rect x="675" y="660" width="1" height="17" fill="#f4f4f4"/>
<rect x="703" y="660" width="1" height="40" fill="#8a8a8a"/>
<rect x="704" y="660" width="1" height="40" fill="#f4f4f4"/>
</g>
<polygon points="616.5,663.5 616.5,672.5 609,668.0" fill="#000" stroke="none" stroke-width="1"/>
<rect x="617" y="663.5" width="2" height="9" fill="#000"/>
<rect x="620.2" y="663.5" width="2" height="9" fill="#000"/>
<rect x="631" y="661" width="14" height="13" fill="#c8c8c8" stroke="#000" stroke-width="2"/>
<polygon points="635,663.5 635,671.5 642,667.5" fill="#000" stroke="none" stroke-width="1"/>
<polygon points="648,674 648,677 645,677" fill="#000" stroke="none" stroke-width="1"/>
<rect x="653.8" y="663.5" width="2" height="9" fill="#000"/>
<rect x="657" y="663.5" width="2" height="9" fill="#000"/>
<polygon points="659.5,663.5 659.5,672.5 667.0,668.0" fill="#000" stroke="none" stroke-width="1"/>
<polygon points="679,663.5 679,672.5 686,668.0" fill="#000" stroke="none" stroke-width="1"/>
<polygon points="686,663.5 686,672.5 693,668.0" fill="#000" stroke="none" stroke-width="1"/>
<rect x="679" y="667" width="11" height="2" fill="#000"/>
<rect x="692.8" y="663.5" width="2.2" height="9" fill="#000"/>
<rect x="583.5" y="686" width="1.6" height="7" fill="#000"/>
<rect x="594" y="686" width="1.6" height="7" fill="#000"/>
<polygon points="589,686.5 589,692.5 585,689.5" fill="#000" stroke="none" stroke-width="1"/>
<polygon points="590,686.5 590,692.5 594,689.5" fill="#000" stroke="none" stroke-width="1"/>
<rect x="587" y="689" width="5" height="1.4" fill="#000"/>
<g shape-rendering="crispEdges">
<rect x="604" y="681" width="64" height="20" fill="#dedede"/>
<rect x="604" y="681" width="64" height="1" fill="#1a1a1a"/>
<rect x="604" y="682" width="64" height="1" fill="#4a4a4a"/>
<rect x="604" y="681" width="1" height="20" fill="#1a1a1a"/>
<rect x="605" y="681" width="1" height="20" fill="#4a4a4a"/>
<rect x="604" y="700" width="64" height="1" fill="#f6f6f6"/>
<rect x="667" y="681" width="1" height="20" fill="#f6f6f6"/>
</g>
<text x="609" y="694" font-size="12" fill="#000">0</text>
<rect x="669" y="683" width="9" height="15" fill="#c5c5c5"/>
<rect x="669" y="683" width="9" height="1" fill="#ffffff"/>
<rect x="669" y="683" width="1" height="15" fill="#ffffff"/>
<rect x="669" y="697" width="9" height="1" fill="#7a7a7a"/>
<rect x="677" y="683" width="1" height="15" fill="#7a7a7a"/>
<polygon points="671.0,689 676.0,689 673.5,685.5" fill="#000" stroke="none" stroke-width="1"/>
<polygon points="671.0,692 676.0,692 673.5,695.5" fill="#000" stroke="none" stroke-width="1"/>
<rect x="685.5" y="683.5" width="9.5" height="10" fill="#f0f0f0" stroke="#222" stroke-width="1"/>
<rect x="685" y="683" width="11" height="2.4" fill="#222"/>
<circle cx="693.6" cy="690" r="3.9" fill="#f4f4f4" stroke="#b01010" stroke-width="0.9"/>
<path d="M693.6,687.6 L693.6,690 L695.8,690" fill="none" stroke="#901010" stroke-width="0.9"/>
<line x1="716.5815" y1="667.6815" x2="722.7815" y2="673.8815000000001" stroke="#1a1a8a" stroke-width="2.4"/>
<line x1="716.8815" y1="667.3815000000001" x2="723.0815" y2="673.5815000000001" stroke="#7a8ae0" stroke-width="0.7"/>
<circle cx="713.4" cy="664.5" r="4.5" fill="#eef0fa" stroke="#1a1a8a" stroke-width="1.1"/>
<circle cx="712.6" cy="663.7" r="2.0" fill="#ffffff"/>
<path d="M734.6,660.3 H746.8 V670.5 H734.6 Z M740.7,660.3 V670.5 M734.6,665.4 H746.8" fill="none" stroke="#a01818" stroke-width="1.1"/>
<line x1="737.4038" y1="671.4038" x2="741.0038000000001" y2="675.0038000000001" stroke="#1a1a8a" stroke-width="1.8"/>
<line x1="737.7038" y1="671.1038000000001" x2="741.3038" y2="674.7038000000001" stroke="#7a8ae0" stroke-width="0.7"/>
<circle cx="735" cy="669" r="3.4" fill="#eef0fa" stroke="#1a1a8a" stroke-width="1.1"/>
<circle cx="734.2" cy="668.2" r="1.5" fill="#ffffff"/>
<path d="M754.5,663.5 V660.5 H758 M766.5,660.5 H770 V663.5 M754.5,671.5 V674.5 H758 M766.5,674.5 H770 V671.5" fill="none" stroke="#111" stroke-width="1.2"/>
<polygon points="756.6,664.2 759.6,661.4 767.2,661.4 764.2,664.2" fill="#f4f4f4" stroke="#1a1a8a" stroke-width="1"/>
<polygon points="764.2,664.2 767.2,661.4 767.2,669.4 764.2,672.2" fill="#8c8c94" stroke="#1a1a8a" stroke-width="1"/>
<rect x="756.6" y="664.2" width="7.6" height="8" fill="#a8a8ae" stroke="#1a1a8a" stroke-width="1"/>
<polygon points="773,674.5 773,677.5 770,677.5" fill="#000" stroke="none" stroke-width="1"/>
<path d="M780,660.3 H792.9 V670.5 H780 Z M786.4,660.3 V670.5 M780,665.4 H792.9" fill="none" stroke="#a01818" stroke-width="1.1"/>
<polygon points="777.2,668 779.6,665.8 786.6,665.8 784.2,668" fill="#d8d8d8" stroke="#1a1a8a" stroke-width="1"/>
<polygon points="784.2,668 786.6,665.8 786.6,672.4 784.2,674.6" fill="#b8b8b8" stroke="#1a1a8a" stroke-width="1"/>
<rect x="777.2" y="668" width="7" height="6.6" fill="#c8c8c8" stroke="#1a1a8a" stroke-width="1"/>
<polygon points="796,674.5 796,677.5 793,677.5" fill="#000" stroke="none" stroke-width="1"/>
<rect x="708.5" y="682.5" width="15" height="13.8" fill="#d8d8d8" stroke="#111" stroke-width="1.2" stroke-dasharray="2.2 1.3"/>
<line x1="715.8038" y1="690.2038" x2="720.0038000000001" y2="694.4038" stroke="#1a1a8a" stroke-width="2"/>
<line x1="716.1038" y1="689.9038" x2="720.3038" y2="694.1038000000001" stroke="#7a8ae0" stroke-width="0.7"/>
<circle cx="713.4" cy="687.8" r="3.4" fill="#eef0fa" stroke="#1a1a8a" stroke-width="1.1"/>
<circle cx="712.6" cy="687.0" r="1.5" fill="#ffffff"/>
<path d="M735.2,690.5 L733,687.2 C732,685.6 733.8,684.6 734.9,686 L737,688.6 L736.6,684.2 C736.5,682.6 738.5,682.5 738.7,684 L739.3,687 L739.7,683.2 C739.8,681.7 741.8,681.8 741.8,683.2 L741.8,687 L742.9,683.8 C743.3,682.5 745.1,682.9 744.9,684.3 L744.2,688 L745.5,686.2 C746.2,685.1 747.8,685.9 747.2,687.2 L745.5,691.4 C745,694.2 743.5,696.4 740.2,696.4 C737.2,696.4 736.2,693.4 735.2,690.5 Z" fill="#ececec" stroke="#111" stroke-width="0.9"/>
<circle cx="761" cy="690" r="4.6" fill="none" stroke="#222" stroke-width="0.9"/>
<line x1="761" y1="683.5" x2="761" y2="690" stroke="#1a1a8a" stroke-width="1.1"/>
<line x1="761" y1="690" x2="755.5" y2="695.5" stroke="#1a1a8a" stroke-width="1.1"/>
<line x1="761" y1="690" x2="767.5" y2="690" stroke="#1a1a8a" stroke-width="1.1"/>
<polygon points="758.8,685 763.2,685 761,681.4" fill="#111" stroke="none" stroke-width="1"/>
<polygon points="754,694.4 757,697.2 753.4,697.8" fill="#111" stroke="none" stroke-width="1"/>
<polygon points="766.6,687.8 766.6,692.2 770.2,690" fill="#111" stroke="none" stroke-width="1"/>
<polygon points="773,696.5 773,699.5 770,699.5" fill="#000" stroke="none" stroke-width="1"/>
<rect x="785.5" y="688.7" width="7.4" height="7.6" fill="#c8c8c8" stroke="#111" stroke-width="1.1"/>
<rect x="778.2" y="682.3" width="12" height="10.2" fill="#c8c8c8" stroke="#1a1a8a" stroke-width="1.2"/>
<path d="M781,685 L787,691" fill="none" stroke="#111" stroke-width="0.9" stroke-dasharray="1.4 1"/>
<polygon points="780.4,684.4 783.4,684.6 780.6,687.4" fill="#111" stroke="none" stroke-width="1"/>
<polygon points="787.6,691.6 784.6,691.4 787.4,688.6" fill="#111" stroke="none" stroke-width="1"/>
<g shape-rendering="crispEdges">
<rect x="800" y="22" width="1" height="38" fill="#9a9ea4"/>
<rect x="801" y="1" width="1" height="704" fill="#444a58"/>
</g>
<rect x="0" y="703" width="802" height="1" fill="#8a8e96"/>
<rect x="0" y="704" width="802" height="1" fill="#3f4450"/>
</svg>
</body></html>
